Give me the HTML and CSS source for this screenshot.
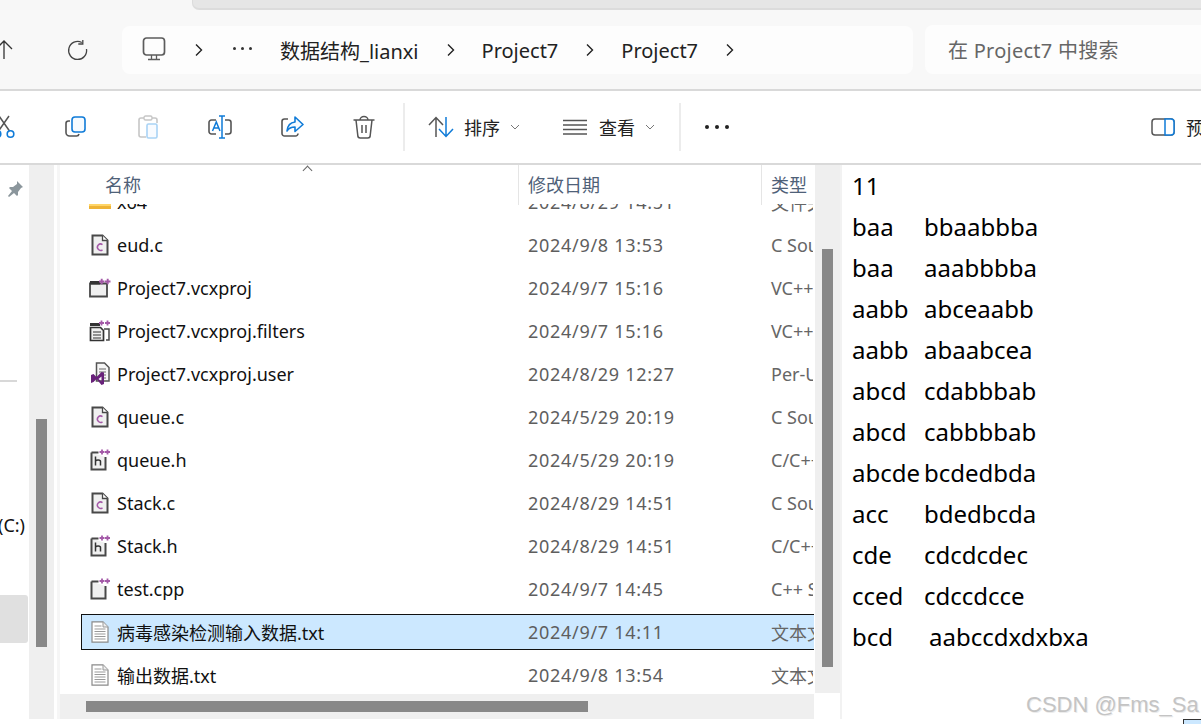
FILE: index.html
```html
<!DOCTYPE html>
<html lang="zh">
<head>
<meta charset="utf-8">
<title>Project7</title>
<link rel="stylesheet" href="styles.css">
</head>
<body>
<svg class="defs" width="0" height="0" aria-hidden="true">
  <symbol id="i-c" viewBox="0 0 18 22"><path d="M1.500 1.500h10l5 5v14h-15z" fill="#f0f0f0" stroke="#484848" stroke-width="2"/><path d="M11.500 1.500v5h5" fill="#fff" stroke="#484848" stroke-width="1.300"/><path d="M11.500 10.600a3.200 3.200 0 1 0 0 5.200" fill="none" stroke="#a45aa8" stroke-width="1.500"/></symbol>
  <symbol id="i-h" viewBox="0 0 20 22"><path d="M1.500 3.500h7M15.500 8v12.500h-14v-17" fill="#f0f0f0" stroke="#484848" stroke-width="2"/><path d="M5.500 7.500v9M5.500 12c1-1.500 5-1.500 5 .5v4" fill="none" stroke="#333" stroke-width="1.500"/><path d="M9.500 3h5M12 .5v5M15 3h5M17.500 .5v5" stroke="#a45aa8" stroke-width="1.800"/></symbol>
  <symbol id="i-cpp" viewBox="0 0 20 22"><path d="M1.500 3.500h7M15.500 8v12.500h-14v-17" fill="#f0f0f0" stroke="#484848" stroke-width="2"/><path d="M9.500 3h5M12 .5v5M15 3h5M17.500 .5v5" stroke="#a45aa8" stroke-width="1.800"/></symbol>
  <symbol id="i-proj" viewBox="0 0 22 20"><path d="M1 5.500h17v13H1z" fill="#f0f0f0" stroke="#484848" stroke-width="1.800"/><path d="M1 3h10v3.500H1z" fill="#333"/><path d="M10 3.500h5.500M12.700 .8v5.400M16 3.500h5.500M18.700 .8v5.400" stroke="#a45aa8" stroke-width="1.900"/></symbol>
  <symbol id="i-filter" viewBox="0 0 22 22"><path d="M1 3h10v3H1z" fill="#333"/><path d="M15 9h5v11h-3" fill="none" stroke="#484848" stroke-width="1.500"/><path d="M1.500 7.500h10l3 3v10h-13z" fill="#f0f0f0" stroke="#333" stroke-width="1.700"/><path d="M4 12h8M4 15h8M4 18h8" stroke="#333" stroke-width="1.200"/><path d="M10 3h5M12.500 .5v5M16 3h5M18.500 .5v5" stroke="#a45aa8" stroke-width="1.800"/></symbol>
  <symbol id="i-user" viewBox="0 0 20 24"><path d="M6.500 1h8l4.500 4.500V19H6.500z" fill="#f6f6f6" stroke="#555" stroke-width="1.500"/><path d="M9 7h7M9 10h7M12 13h4M12 16h4" stroke="#666" stroke-width="1.100"/><path d="M1 13v8l2.500-1 3-3 5 6 2.500-1V10.500L11.500 10l-5 5-3-3zM11.500 14.500v5L8.500 17z" fill="#68217a" fill-rule="evenodd"/></symbol>
  <symbol id="i-txt" viewBox="0 0 18 22"><path d="M1 .9h11l5 5v15.200H1z" fill="#fff" stroke="#8a8a8a" stroke-width="1.200"/><path d="M12 1v5h5" fill="#eee" stroke="#999"/><path d="M3.500 5h7M3.500 8h11M3.500 10.500h11M3.500 13h11M3.500 15.500h11M3.500 18h11" stroke="#999" stroke-width="1"/></symbol>
  <symbol id="i-chev" viewBox="0 0 10 14"><path d="M2 1.500 7.500 7 2 12.500" fill="none" stroke="#222" stroke-width="1.400"/></symbol>
  <symbol id="i-down" viewBox="0 0 10 6"><path d="M1 1l4 4 4-4" fill="none" stroke="#777" stroke-width="1"/></symbol>
</svg>

<div class="tabstrip"><div class="tab"></div></div>

<header class="navbar">
  <svg class="nav-up" width="24" height="24" viewBox="0 0 24 24"><path d="M4 21V3.500M-4 11 4 3l8 8" fill="none" stroke="#333" stroke-width="1.300"/></svg>
  <svg class="nav-refresh" width="22" height="22" viewBox="0 0 22 22"><path d="M15.800 3.500a9 9 0 1 0 4.700 6.500" fill="none" stroke="#444" stroke-width="1.300"/><path d="M16.800 1v4h-4.500" fill="none" stroke="#444" stroke-width="1.300"/></svg>
  <nav class="address">
    <svg class="pc" width="24" height="24" viewBox="0 0 24 24"><rect x="1.500" y="1" width="21" height="17" rx="3" fill="none" stroke="#5c5c5c" stroke-width="1.700"/><path d="M9.500 18v4M14.500 18v4M6 22.500h12" stroke="#5c5c5c" stroke-width="1.300"/></svg>
    <svg class="chev chev-first" width="10" height="14"><use href="#i-chev"/></svg>
    <span class="crumb-dots"><i></i><i></i><i></i></span>
    <span class="crumb">数据结构_lianxi</span>
    <svg class="chev" width="10" height="14"><use href="#i-chev"/></svg>
    <span class="crumb">Project7</span>
    <svg class="chev" width="10" height="14"><use href="#i-chev"/></svg>
    <span class="crumb">Project7</span>
    <svg class="chev" width="10" height="14"><use href="#i-chev"/></svg>
  </nav>
  <div class="search">在 Project7 中搜索</div>
</header>

<section class="toolbar">
  <div class="tool"><svg width="24" height="24" viewBox="0 0 24 24"><path d="M17 1 6.500 16M7 1l10.500 15" stroke="#555" stroke-width="1.500"/><circle cx="5.500" cy="19" r="3.300" fill="none" stroke="#0f7bd8" stroke-width="1.600"/><circle cx="18.500" cy="19" r="3.300" fill="none" stroke="#0f7bd8" stroke-width="1.600"/></svg></div>
  <div class="tool"><svg width="24" height="24" viewBox="0 0 24 24"><path d="M6 6H4.500A2.500 2.500 0 0 0 2 8.500v9A3.500 3.500 0 0 0 5.500 21h7a2.500 2.500 0 0 0 2.500-2" fill="none" stroke="#555" stroke-width="1.600"/><rect x="8" y="2" width="13" height="15" rx="3" fill="#f6fbff" stroke="#0f7bd8" stroke-width="1.600"/></svg></div>
  <div class="tool"><svg width="24" height="24" viewBox="0 0 24 24"><path d="M8 3H5a2 2 0 0 0-2 2v15a2 2 0 0 0 2 2h5M16 3h3a2 2 0 0 1 2 2v3" fill="none" stroke="#c6c6c6" stroke-width="1.600"/><rect x="8" y="1" width="8" height="4" rx="1.500" fill="none" stroke="#c6c6c6" stroke-width="1.400"/><rect x="11" y="9" width="10" height="14" rx="1.500" fill="#f8fbff" stroke="#a9d3f5" stroke-width="1.600"/></svg></div>
  <div class="tool"><svg width="24" height="24" viewBox="0 0 24 24"><path d="M8 5H3.500A2.500 2.500 0 0 0 1 7.500v9A2.500 2.500 0 0 0 3.500 19H8M17 5h3.500A2.500 2.500 0 0 1 23 7.500v9a2.500 2.500 0 0 1-2.500 2.500H17" fill="none" stroke="#555" stroke-width="1.600"/><path d="M4.500 16 8.300 7l3.700 9M6 13h5" fill="none" stroke="#0f7bd8" stroke-width="1.500"/><path d="M14 1v22M11 1h6M11 23h6" stroke="#0f7bd8" stroke-width="1.500"/></svg></div>
  <div class="tool"><svg width="24" height="24" viewBox="0 0 24 24"><path d="M8 4H4.500A2.500 2.500 0 0 0 2 6.500v12A2.500 2.500 0 0 0 4.500 21h11a2.500 2.500 0 0 0 2.500-2.500" fill="none" stroke="#555" stroke-width="1.600"/><path d="M15 2l8 7.500-8 7V12C11 12 8.500 13.500 7 16c.5-5 3.500-8.500 8-9z" fill="#f6fbff" stroke="#0f7bd8" stroke-width="1.600" stroke-linejoin="round"/></svg></div>
  <div class="tool"><svg width="24" height="24" viewBox="0 0 24 24"><path d="M1.500 5h21M4 5l1.800 15.500A2.500 2.500 0 0 0 8.300 23h7.400a2.500 2.500 0 0 0 2.500-2.500L20 5M8 5a4 3.500 0 0 1 8 0M10 10v8M14 10v8" fill="none" stroke="#555" stroke-width="1.500"/></svg></div>
  <span class="sep sep-a"></span>
  <svg class="sort-ic" width="26" height="24" viewBox="0 0 26 24"><path d="M8 22V3M1 10l7-7.500L15 10" fill="none" stroke="#555" stroke-width="1.500"/><path d="M18 2v19.500M11 14l7 7.500 7-7.500" fill="none" stroke="#0f7bd8" stroke-width="1.500"/></svg>
  <span class="tool-label">排序</span>
  <svg class="caret" width="10" height="6"><use href="#i-down"/></svg>
  <svg class="view-ic" width="24" height="16" viewBox="0 0 24 16"><path d="M0 1.500h24M0 6h24M0 10.500h24M0 15h24" stroke="#555" stroke-width="1.300"/></svg>
  <span class="tool-label">查看</span>
  <svg class="caret" width="10" height="6"><use href="#i-down"/></svg>
  <span class="sep sep-b"></span>
  <span class="more"><i></i><i></i><i></i></span>
  <svg class="pane-ic" width="24" height="18" viewBox="0 0 24 18"><rect x="1" y="1" width="22" height="16" rx="3" fill="none" stroke="#555" stroke-width="1.500"/><path d="M14 1h6a3 3 0 0 1 3 3v10a3 3 0 0 1-3 3h-6z" fill="#fff" stroke="#0f7bd8" stroke-width="1.500"/></svg>
  <span class="tool-label pane-label">预览窗格</span>
</section>

<main class="body">
  <aside class="sidebar">
    <svg class="pin" width="16" height="16" viewBox="0 0 16 16"><path d="M10 0l6 6-2 1-3 4 0 3-1 1-3-3-5 4-1-1 4-5-3-3 1-1h3l4-3z" fill="#8b969c"/></svg>
    <div class="side-line"></div>
    <div class="side-drive">(C:)</div>
    <div class="side-sel"></div>
  </aside>
  <div class="side-scroll"><div class="side-thumb"></div></div>

  <section class="files">
    <div class="files-main">
      <div class="list-head">
        <span class="sort-caret"></span>
        <div class="hcol hcol-name">名称</div>
        <div class="hcol hcol-date">修改日期</div>
        <div class="hcol hcol-type">类型</div>
      </div>
      <div class="rows">
        <div class="row"><svg class="ficon" width="22" height="18" viewBox="0 0 22 18"><path d="M0 4h22v12H0z" fill="#ffd567"/><path d="M0 13h22v3H0z" fill="#eeb336"/></svg><span class="name">x64</span><span class="date">2024/8/29 14:51</span><span class="type">文件夹</span></div>
        <div class="row"><svg class="ficon" width="18" height="22"><use href="#i-c"/></svg><span class="name">eud.c</span><span class="date">2024/9/8 13:53</span><span class="type">C Source</span></div>
        <div class="row"><svg class="ficon" width="22" height="20"><use href="#i-proj"/></svg><span class="name">Project7.vcxproj</span><span class="date">2024/9/7 15:16</span><span class="type">VC++ Project</span></div>
        <div class="row"><svg class="ficon" width="22" height="22"><use href="#i-filter"/></svg><span class="name">Project7.vcxproj.filters</span><span class="date">2024/9/7 15:16</span><span class="type">VC++ Project</span></div>
        <div class="row"><svg class="ficon" width="20" height="24"><use href="#i-user"/></svg><span class="name">Project7.vcxproj.user</span><span class="date">2024/8/29 12:27</span><span class="type">Per-User</span></div>
        <div class="row"><svg class="ficon" width="18" height="22"><use href="#i-c"/></svg><span class="name">queue.c</span><span class="date">2024/5/29 20:19</span><span class="type">C Source</span></div>
        <div class="row"><svg class="ficon" width="20" height="22"><use href="#i-h"/></svg><span class="name">queue.h</span><span class="date">2024/5/29 20:19</span><span class="type">C/C++ Header</span></div>
        <div class="row"><svg class="ficon" width="18" height="22"><use href="#i-c"/></svg><span class="name">Stack.c</span><span class="date">2024/8/29 14:51</span><span class="type">C Source</span></div>
        <div class="row"><svg class="ficon" width="20" height="22"><use href="#i-h"/></svg><span class="name">Stack.h</span><span class="date">2024/8/29 14:51</span><span class="type">C/C++ Header</span></div>
        <div class="row"><svg class="ficon" width="20" height="22"><use href="#i-cpp"/></svg><span class="name">test.cpp</span><span class="date">2024/9/7 14:45</span><span class="type">C++ Source</span></div>
        <div class="row row-selected"><svg class="ficon" width="18" height="22"><use href="#i-txt"/></svg><span class="name">病毒感染检测输入数据.txt</span><span class="date">2024/9/7 14:11</span><span class="type">文本文档</span></div>
        <div class="row"><svg class="ficon" width="18" height="22"><use href="#i-txt"/></svg><span class="name">输出数据.txt</span><span class="date">2024/9/8 13:54</span><span class="type">文本文档</span></div>
      </div>
      <div class="h-scroll"><div class="h-thumb"></div></div>
    </div>
    <div class="v-scroll"><div class="v-thumb"></div></div>
  </section>

  <section class="notepad">
    <div class="line">11</div>
    <div class="line"><span class="k">baa</span><span>bbaabbba</span></div>
    <div class="line"><span class="k">baa</span><span>aaabbbba</span></div>
    <div class="line"><span class="k">aabb</span><span>abceaabb</span></div>
    <div class="line"><span class="k">aabb</span><span>abaabcea</span></div>
    <div class="line"><span class="k">abcd</span><span>cdabbbab</span></div>
    <div class="line"><span class="k">abcd</span><span>cabbbbab</span></div>
    <div class="line"><span class="k">abcde</span><span>bcdedbda</span></div>
    <div class="line"><span class="k">acc</span><span>bdedbcda</span></div>
    <div class="line"><span class="k">cde</span><span>cdcdcdec</span></div>
    <div class="line"><span class="k">cced</span><span>cdccdcce</span></div>
    <div class="line"><span class="k k-wide">bcd</span><span>aabccdxdxbxa</span></div>
    <div class="watermark">CSDN @Fms_Sa</div>
  </section>
</main>
<footer class="foot"><div class="foot-box"></div></footer>
</body>
</html>
```

FILE: styles.css
```css
* { box-sizing: border-box; }
html, body { margin: 0; padding: 0; }
body {
  width: 1201px;
  height: 724px;
  overflow: hidden;
  background: #fff;
  color: #111;
  font-family: "Noto Sans", "Noto Sans CJK SC", sans-serif;
  font-size: 18px;
}
.defs { position: absolute; }

.tabstrip { height: 10px; background: #f7f7f7; padding-left: 192px; }
.tab {
  height: 10px;
  background: #e6e6e6;
  border-bottom: 2px solid #dcdcdc;
  border-left: 1px solid #dcdcdc;
  border-bottom-left-radius: 7px;
}

.navbar {
  height: 81px;
  background: #f8f8f8;
  border-bottom: 2px solid #d9d9d9;
  display: flex;
  align-items: flex-start;
  padding-top: 15px;
  overflow: hidden;
}
.nav-up { margin: 13px 0 0 0; flex: none; }
.nav-refresh { margin: 14px 0 0 42px; flex: none; }
.address {
  width: 791px;
  height: 48px;
  margin: 1px 0 0 34px;
  background: #fdfdfd;
  border-radius: 8px;
  display: flex;
  align-items: center;
  flex: none;
  padding-left: 20px;
  font-size: 20px;
}
.pc { flex: none; margin-top: -3px; }
.chev { flex: none; margin-right: 26px; }
.chev-first { margin-left: 28px; margin-right: 0; }
.crumb-dots { margin-left: 29px; width: 47px; display: flex; gap: 5px; margin-top: -3px; flex: none; }
.crumb-dots i { width: 3px; height: 3px; border-radius: 50%; background: #333; display: block; }
.crumb { margin-right: 27px; color: #222; white-space: nowrap; }
.search {
  width: 290px;
  height: 49px;
  margin-left: 12px;
  background: #fdfdfd;
  border-radius: 8px;
  display: flex;
  align-items: center;
  padding-left: 23px;
  color: #666;
  flex: none;
  white-space: nowrap;
  font-size: 20px;
  letter-spacing: .25px;
}

.toolbar {
  height: 74px;
  background: #fff;
  border-bottom: 2px solid #d9d9d9;
  display: flex;
  align-items: center;
  overflow: hidden;
  white-space: nowrap;
}
.tool { width: 72px; flex: none; display: flex; justify-content: center; align-items: center; }
.tool:first-child { margin-left: -32px; }
.tool svg { display: block; }
.sep { width: 2px; height: 48px; background: #ececec; flex: none; }
.sep-a { margin-left: 3px; }
.sep-b { margin-left: 24px; }
.sort-ic { margin-left: 23px; flex: none; }
.tool-label { color: #222; font-size: 18px; flex: none; }
.sort-ic + .tool-label { margin-left: 10px; }
.caret { flex: none; margin-left: 10px; }
.view-ic { flex: none; margin-left: 43px; }
.view-ic + .tool-label { margin-left: 12px; }
.more { display: flex; gap: 6px; margin-left: 24px; flex: none; }
.more i { width: 4px; height: 4px; border-radius: 50%; background: #222; display: block; }
.pane-ic { margin-left: 422px; flex: none; }
.pane-label { margin-left: 11px; }

.body { height: 554px; display: flex; }
.sidebar { width: 29px; flex: none; display: flex; flex-direction: column; overflow: hidden; }
.pin { margin: 16px 0 0 7px; flex: none; }
.side-line { width: 17px; height: 2px; background: #d8d8d8; margin-top: 183px; flex: none; }
.side-drive { margin: 131px 0 0 -2px; line-height: 24px; height: 24px; flex: none; color: #111; font-size: 18px; white-space: nowrap; }
.side-sel { width: 28px; height: 48px; background: #e0e0e0; border-radius: 0 3px 3px 0; margin-top: 58px; flex: none; }
.side-scroll { width: 25px; flex: none; background: #efefef; padding: 254px 7px 0; }
.side-thumb { width: 11px; height: 228px; background: #888; }

.files { margin-left: 3px; display: flex; border-left: 3px solid #f6f6f6; flex: none; width: 783px; }
.files-main { width: 754px; margin-right: 1px; flex: none; display: flex; flex-direction: column; }
.list-head { height: 39px; display: flex; position: relative; z-index: 1; background: #fff; flex: none; color: #4f6178; font-size: 18px; }
.sort-caret {
  position: absolute;
  left: 244px;
  top: 2px;
  width: 7px;
  height: 7px;
  border-left: 1px solid #666;
  border-top: 1px solid #666;
  transform: rotate(45deg);
}
.hcol { height: 40px; display: flex; align-items: center; padding-bottom: 2px; }
.hcol-name { width: 458px; padding-left: 45px; }
.hcol-date { width: 243px; padding-left: 9px; border-left: 1px solid #e5e5e5; }
.hcol-type { width: 53px; padding-left: 9px; border-left: 1px solid #e5e5e5; }

.rows { height: 490px; overflow: hidden; flex: none; display: flex; flex-direction: column; gap: 7px; }
.row {
  height: 36px;
  flex: none;
  margin-left: 21px;
  border: 1px solid transparent;
  display: flex;
  align-items: center;
  white-space: nowrap;
  padding-left: 7px;
  overflow: hidden;
}
.row:first-child { margin-top: -20px; }
.row-selected { background: #cce8ff; border-color: #111; border-right: 0; }
.ficon { width: 22px; flex: none; }
.name { width: 417px; flex: none; padding-left: 6px; color: #111; }
.date { width: 243px; flex: none; color: #5e5e5e; letter-spacing: .7px; }
.type { color: #666; }

.h-scroll { height: 25px; flex: none; background: #efefef; padding: 7px 0 0 26px; }
.h-thumb { width: 502px; height: 11px; background: #888; }
.v-scroll { width: 25px; height: 528px; background: #efefef; flex: none; padding: 84px 7px 0; }
.v-thumb { width: 11px; height: 418px; background: #888; }

.notepad {
  flex: 1;
  min-width: 0;
  border-left: 2px solid #f2f2f2;
  padding: 0 0 0 10px;
  font-size: 24px;
  color: #000;
  overflow: hidden;
  position: relative;
}
.line { height: 41px; line-height: 41px; display: flex; white-space: nowrap; }
.k { width: 72px; flex: none; }
.k-wide { width: 77px; }
.watermark {
  position: absolute;
  left: 184px;
  top: 526px;
  font-family: "Liberation Sans", sans-serif;
  font-size: 22px;
  line-height: 28px;
  color: #c4c4c4;
  text-shadow: 1px 1px 0 #ececec;
  white-space: nowrap;
}

.foot { height: 5px; display: flex; justify-content: flex-end; }
.foot-box { width: 18px; height: 5px; background: #cce8ff; border: 1px solid #333; border-right: 0; border-bottom: 0; }
```
